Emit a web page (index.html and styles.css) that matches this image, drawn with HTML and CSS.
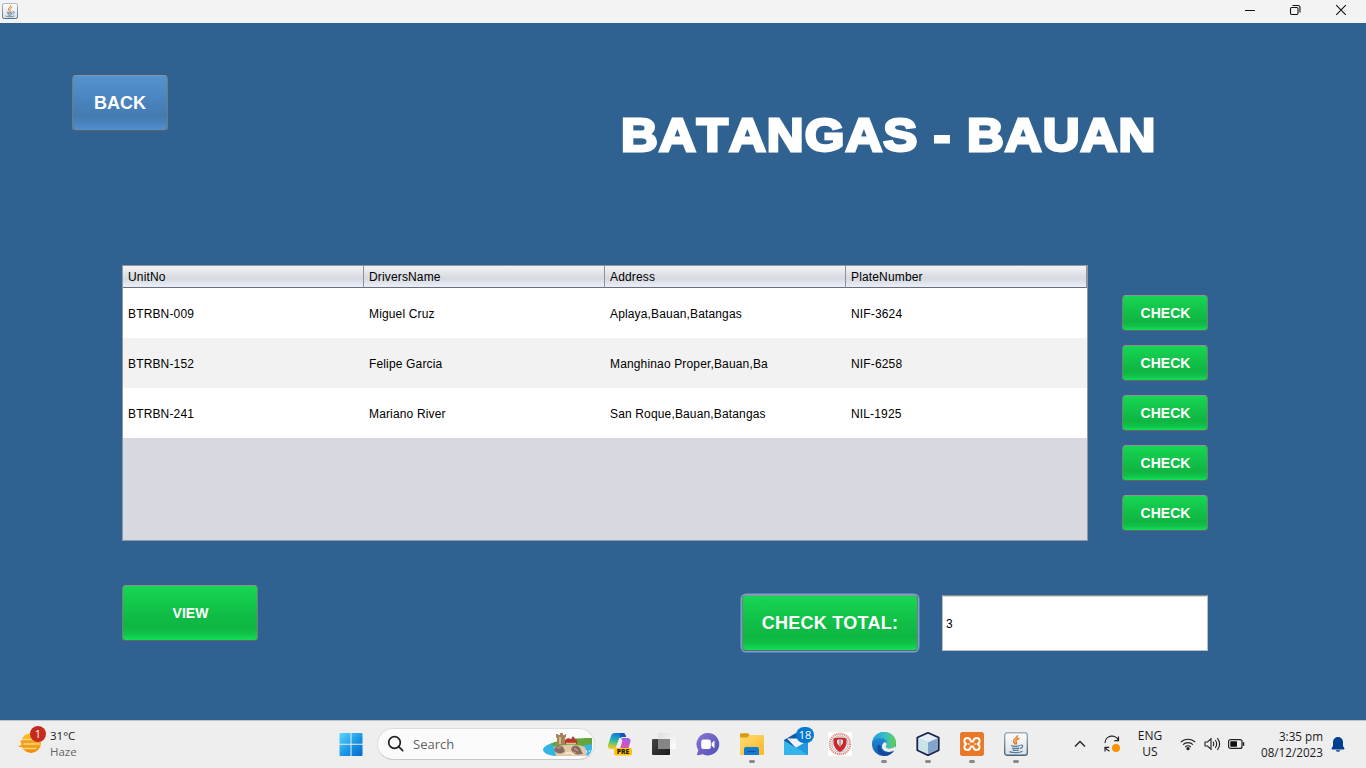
FILE: index.html
```html
<!DOCTYPE html>
<html lang="en">
<head>
<meta charset="utf-8">
<title>Batangas - Bauan</title>
<link rel="stylesheet" href="styles.css">
</head>
<body>
<svg width="0" height="0" class="defs">
  <defs>
    <linearGradient id="javaBorder" x1="0" y1="0" x2="0" y2="1"><stop offset="0" stop-color="#9db3c4"/><stop offset="1" stop-color="#43637d"/></linearGradient>
    <linearGradient id="javaFill" x1="0" y1="0" x2="0" y2="1"><stop offset="0" stop-color="#fdfdfd"/><stop offset="1" stop-color="#dde0e3"/></linearGradient>
    <symbol id="java" viewBox="0 0 24 24">
      <rect x=".7" y=".7" width="22.6" height="22.6" rx="2.6" fill="url(#javaFill)" stroke="url(#javaBorder)" stroke-width="1.4"/>
      <path d="M13.4 3.2c1 2.4-4.3 3.6-3.8 6.2.2 1.3 1.4 2 1.6 3.3M15.4 6.3c-2.400.9-4 2-3.400 3.300.4 1 .9 1.500.1 2.700" fill="none" stroke="#ea7a20" stroke-width="1.5"/>
      <path d="M7 13.500c2 .8 6.500.8 9 0M8 15.800c2 .7 5.500.7 7.400 0M8.600 17.900c1.800.6 4.300.6 6 0M5.400 19.600c3 1.500 10 1.500 13.200-.3M16.500 13.200c3-.7 2.800 2.500-.3 3.300" fill="none" stroke="#537f9f" stroke-width="1.300"/>
    </symbol>
  </defs>
</svg>

<header class="titlebar">
  <svg class="app-icon" width="16" height="16"><use href="#java"/></svg>
  <div class="window-controls">
    <svg width="46" height="22" viewBox="0 0 46 22"><path d="M18 10.500h10" stroke="#111" fill="none"/></svg>
    <svg width="46" height="22" viewBox="0 0 46 22" fill="none" stroke="#111" stroke-width="1.100"><rect x="17.500" y="7.500" width="7.500" height="7" rx="1.200"/><path d="M19.500 5.500h5.500a2 2 0 0 1 2 2v5"/></svg>
    <svg width="46" height="22" viewBox="0 0 46 22"><path d="M17.200 5.200l9.600 9.600m0-9.600l-9.600 9.600" stroke="#111" stroke-width="1.100" fill="none"/></svg>
  </div>
</header>

<main class="form">
  <section class="heading">
    <button class="btn btn-back">BACK</button>
    <h1>BATANGAS - BAUAN</h1>
  </section>

  <section class="records">
    <table class="grid">
      <thead><tr><th>UnitNo</th><th>DriversName</th><th>Address</th><th>PlateNumber</th></tr></thead>
      <tbody>
        <tr><td>BTRBN-009</td><td>Miguel Cruz</td><td>Aplaya,Bauan,Batangas</td><td>NIF-3624</td></tr>
        <tr><td>BTRBN-152</td><td>Felipe Garcia</td><td>Manghinao Proper,Bauan,Ba</td><td>NIF-6258</td></tr>
        <tr><td>BTRBN-241</td><td>Mariano River</td><td>San Roque,Bauan,Batangas</td><td>NIL-1925</td></tr>
        <tr class="blank"><td colspan="4"></td></tr>
      </tbody>
    </table>
    <div class="checks">
      <button class="btn">CHECK</button>
      <button class="btn">CHECK</button>
      <button class="btn">CHECK</button>
      <button class="btn">CHECK</button>
      <button class="btn">CHECK</button>
    </div>
  </section>

  <section class="actions">
    <button class="btn btn-view">VIEW</button>
    <div class="total">
      <button class="btn btn-total">CHECK TOTAL:</button>
      <input class="total-value" type="text" value="3">
    </div>
  </section>
</main>

<footer class="taskbar">
  <div class="weather">
    <svg width="32" height="32" viewBox="0 0 32 32">
      <defs><linearGradient id="sun" x1="0" y1="0" x2="0" y2="1"><stop offset="0" stop-color="#ffc51d"/><stop offset="1" stop-color="#f08a00"/></linearGradient></defs>
      <circle cx="15" cy="18" r="10" fill="url(#sun)"/>
      <path d="M6 14.500h11M8 19h15M6 23.500h14" stroke="#fbd58c" stroke-width="1.400" stroke-linecap="round"/>
      <path d="M5 16.500h11M3.500 21.200h13" stroke="#ef9a24" stroke-width="1.500" stroke-linecap="round"/>
      <circle cx="22" cy="9" r="8" fill="#c42b1c"/>
      <text x="22" y="13" text-anchor="middle" font-size="11" fill="#fff">1</text>
    </svg>
    <p>31°C<br><span>Haze</span></p>
  </div>

  <nav class="apps">
    <a class="app"><svg width="24" height="24" viewBox="0 0 24 24">
      <defs><linearGradient id="win" gradientUnits="userSpaceOnUse" x1="0" y1="0" x2="24" y2="24"><stop offset="0" stop-color="#5cdcff"/><stop offset=".6" stop-color="#1691e2"/><stop offset="1" stop-color="#0467cb"/></linearGradient></defs>
      <path fill="url(#win)" d="M1.500 1H11.500v10.800H.5V2a1 1 0 0 1 1-1zM12.500 1h10a1 1 0 0 1 1 1v9.800h-11zM.5 12.800h11V24h-10a1 1 0 0 1-1-1zM12.500 12.800h11V23a1 1 0 0 1-1 1h-10z"/></svg></a>
    <div class="search">
      <svg width="18" height="18" viewBox="0 0 18 18" fill="none" stroke="#222" stroke-width="1.700"><circle cx="7.500" cy="7.500" r="5.800"/><path d="M11.700 11.700l4 4" stroke-linecap="round"/></svg>
      <span>Search</span>
      <svg class="scene" width="52" height="28" viewBox="0 0 52 28">
        <path d="M1 19c3-5 9-6 18-7l31-1v8q-1 5-5 7H12C6 25 1 23 1 19z" fill="#35b5e5"/>
        <path d="M8 14c9-5 30-6 42-6v6c-8 1-11 3-19 3-10 1-18 0-23-3z" fill="#63a63b"/>
        <path d="M12 17c10-3 24-3 31 0l2 9H14z" fill="#dfc9a7"/>
        <path d="M14 4h2v1h2V3h3v2h2V4h1v3l-1 1v7h-8V8l-1-1z" fill="#a5845a"/>
        <path d="M18 7v7" stroke="#d5b888" stroke-width="2"/>
        <path d="M23 10l3-2 3 1 2-3 2 3 2 1v4H23z" fill="#b5392d"/>
        <path d="M24 13.500h10" stroke="#e5b996" stroke-width="1.500"/>
        <path d="M12 20c1-5 7-5 9-3l2 4c-2 3-8 4-11-1zM29 19c2-5 7-4 9-1l3 6c-6 1-10 1-12-5z" fill="#8b6a5f"/>
        <path d="M15 18l4-1M32 18l4 3M31 22l3 1" stroke="#b99b8c" stroke-width="1.500"/>
        <path d="M23 24q5-3 9 1" stroke="#f2e3cb" stroke-width="2" fill="none"/>
        <path d="M44 20l1 3m3-3l-1 2" stroke="#d9f4fb"/>
      </svg>
    </div>
    <a class="app"><svg width="26" height="26" viewBox="0 0 26 26">
      <defs>
        <linearGradient id="cp1" x1=".5" y1="0" x2=".3" y2="1"><stop offset="0" stop-color="#1473da"/><stop offset=".45" stop-color="#24b3b3"/><stop offset=".8" stop-color="#a8cc3a"/><stop offset="1" stop-color="#f5c32c"/></linearGradient>
        <linearGradient id="cp2" x1=".5" y1="0" x2=".3" y2="1"><stop offset="0" stop-color="#9a60ee"/><stop offset=".6" stop-color="#e355a2"/><stop offset="1" stop-color="#f79a55"/></linearGradient>
      </defs>
      <path d="M8 2h8c2 0 2.500 2 3 4h-4c-2 0-3 1-3.500 3L9 16c-.7 1.500-1.500 2-3 2H4c-2.500 0-3.500-2-3-4L4 5c.6-2 2-3 4-3z" fill="url(#cp1)"/>
      <path d="M13 2h3c2 0 2.500 2 3 4h-4l-2 1z" fill="#1855b7"/>
      <path d="M15 7h5c3 0 4 2 3.300 4L21 19c-.8 2-2 3-4 3h-7c2 0 2.400-2 3-4l2-7c.400-1.500.400-2.500-1-3z" fill="url(#cp2)"/>
      <rect x="7" y="17" width="18" height="7.600" rx="2" fill="#ffc400"/>
      <text x="16" y="23.200" text-anchor="middle" font-size="6.800" font-weight="800" fill="#222">PRE</text></svg></a>
    <a class="app"><svg width="24" height="24" viewBox="0 0 24 24">
      <defs><linearGradient id="tv" x1="0" y1="0" x2="1" y2="1"><stop offset="0" stop-color="#444"/><stop offset="1" stop-color="#1c1c1c"/></linearGradient><linearGradient id="tv2" x1="0" y1="0" x2="1" y2="1"><stop offset="0" stop-color="#dedede"/><stop offset="1" stop-color="#fff"/></linearGradient></defs>
      <rect x="0" y="7" width="18" height="16" rx="1" fill="url(#tv)"/><rect x="6" y="1" width="17.700" height="16" rx="1" fill="url(#tv2)"/><path d="M6 7h12v10H7a1 1 0 0 1-1-1z" fill="#858585"/></svg></a>
    <a class="app"><svg width="24" height="24" viewBox="0 0 24 24">
      <defs><linearGradient id="chat" x1="0" y1="0" x2="1" y2="1"><stop offset="0" stop-color="#8d75d2"/><stop offset="1" stop-color="#4e4fb9"/></linearGradient></defs>
      <path d="M12 1a11.200 11.200 0 1 1-5 21.200L1.500 23.200q-.8 0-.5-1l1.300-4A11.200 11.200 0 0 1 12 1z" fill="url(#chat)"/><rect x="5.200" y="7.500" width="9.600" height="9.500" rx="2" fill="#fff"/><path d="M15.600 11L18.500 8.500v7.700l-2.900-2.500z" fill="#fff"/></svg></a>
    <a class="app running"><svg width="24" height="24" viewBox="0 0 24 24">
      <defs><linearGradient id="fold" x1="0" y1="0" x2="1" y2="1"><stop offset="0" stop-color="#ffdc70"/><stop offset="1" stop-color="#f7b928"/></linearGradient></defs>
      <path d="M0 2.500a1.200 1.200 0 0 1 1.200-1.200H8L10 3.500v5H0z" fill="#d99a0b"/><path d="M9.500 3H23a1 1 0 0 1 1 1v18a1 1 0 0 1-1 1H1a1 1 0 0 1-1-1V5.500h7.500z" fill="url(#fold)"/><path d="M4 23v-6a2 2 0 0 1 2-2h11a2 2 0 0 1 2 2v6z" fill="#167bd0"/><path d="M7.500 19.500h8" stroke="#0a55a0" stroke-width="1.200"/></svg></a>
    <a class="app"><svg width="24" height="24" viewBox="0 0 24 24">
      <path d="M0 8L12 1l12 7v15H0z" fill="#1558a6"/><path d="M3 6.500h18V12l-9 4z" fill="#edf3f8"/><path d="M0 8.500L24 23H1a1 1 0 0 1-1-1z" fill="#34b5ee"/><path d="M24 8.500L0 23h23a1 1 0 0 0 1-1z" fill="#2299df"/><path d="M0 23l12-7.500L24 23z" fill="#32b4ed"/></svg><b class="badge">18</b></a>
    <a class="app"><svg width="24" height="24" viewBox="0 0 24 24">
      <rect width="24" height="24" fill="#fff"/><circle cx="12" cy="12" r="10.200" fill="none" stroke="#dd8b8b" stroke-width="2.200" stroke-dasharray="1.300 .7"/><circle cx="12" cy="12" r="8.200" fill="#fbeeee" stroke="#76a590" stroke-width=".7"/><path d="M5.500 6.500q6.500-2 13 0v5.500q-1 5-6.500 8-5.500-3-6.500-8z" fill="#cf2430"/><path d="M9 8q3-1.500 6 0v3l-3 4-3-4z" fill="#ead9d5"/><path d="M12 7v8" stroke="#6b8f79" stroke-width="1.200"/></svg></a>
    <a class="app running"><svg width="24" height="24" viewBox="0 0 24 24">
      <defs><linearGradient id="e1" x1="0" y1="0" x2="1" y2="0"><stop offset="0" stop-color="#239be0"/><stop offset=".55" stop-color="#35bfc3"/><stop offset="1" stop-color="#67cf4b"/></linearGradient><linearGradient id="e2" x1="0" y1="0" x2="0" y2="1"><stop offset="0" stop-color="#2299df"/><stop offset="1" stop-color="#145cb3"/></linearGradient></defs>
      <circle cx="12" cy="12" r="12" fill="url(#e2)"/>
      <path d="M8.500 13.500C8 20 15 23 22.300 18.200 20 22 16 24 12 24 7 23 4 18 6 13z" fill="#15499a"/>
      <path d="M.3 10.500C1.500 4 6.500 0 12 0c7 0 12 5 12 10.500 0 4-3 6-6 6-3.500 0-5-1.400-4-2.500 3-4-1-8-5.500-8C4.500 6 1.500 8 .3 10.500z" fill="url(#e1)"/>
      <path d="M14 14c-1 1.100.5 2.500 4 2.500 2 0 4-.8 5.200-2.500l.8 4-2 .5c-5 3-11 1-12-3-.5-2.500 1-5 3-5.500 2 .5 2 3 1 4z" fill="#eee"/></svg></a>
    <a class="app running"><svg width="24" height="24" viewBox="0 0 24 24">
      <path d="M12 .8l10.700 4.700v12.800L12 23.300 1.300 18.300V5.500z" fill="#a9cadd" stroke="#1d2149" stroke-width="1.800" stroke-linejoin="round"/><path d="M2.500 6.200L12 10.300l9.500-4.100L12 2z" fill="#e4eff5"/><path d="M12 10.500l9.600-4v11L12 22z" fill="#82a5cb"/><path d="M2.500 6.500l9.500 4V22l-9.500-4.300z" fill="#c9e4e9"/></svg></a>
    <a class="app running"><svg width="24" height="24" viewBox="0 0 24 24">
      <rect x=".3" y=".3" width="23.400" height="23.400" rx="2.500" fill="#ee7722" stroke="#c76117" stroke-width=".6"/><path d="M10.600 9.600C11 5.200 4.400 4.800 4.400 8.900c0 1.900 1.200 3 2.800 3.100-1.600.1-2.800 1.200-2.800 3.100 0 4.100 6.600 3.700 6.200-.7M13.400 9.600c-.4-4.400 6.200-4.800 6.200-.7 0 1.900-1.200 3-2.800 3.100 1.600.1 2.800 1.200 2.800 3.100 0 4.100-6.600 3.700-6.200-.7M10.200 9.600h3.600M10.200 14.400h3.600M8.400 12h1M14.600 12h1" fill="none" stroke="#fff" stroke-width="2"/></svg></a>
    <a class="app running"><svg width="24" height="24"><use href="#java"/></svg></a>
  </nav>

  <div class="tray">
    <svg class="chevron" width="12" height="8" viewBox="0 0 12 8" fill="none" stroke="#222" stroke-width="1.400"><path d="M1 6.500l5-5 5 5"/></svg>
    <svg class="sync" width="18" height="18" viewBox="0 0 18 18" fill="none" stroke="#222" stroke-width="1.200"><path d="M2 8A7 7 0 0 1 15.500 5.500M15.500 1.500v4.200h-4.200M2 16.500v-4.200h4.200M2.300 12.500q1.700 3 4.200 3.700"/><circle cx="13" cy="13" r="4" fill="#fb9404" stroke="none"/></svg>
    <p class="lang">ENG<br>US</p>
    <svg class="wifi" width="16" height="14" viewBox="0 0 16 14" fill="none" stroke="#222" stroke-width="1.100"><path d="M.8 5.200a10.200 10.200 0 0 1 14.400 0M3 7.700a7 7 0 0 1 10 0M5.200 10a4 4 0 0 1 5.600 0"/><circle cx="8" cy="11.700" r="1.100" fill="#222"/></svg>
    <svg class="volume" width="17" height="14" viewBox="0 0 17 14" fill="none" stroke="#222" stroke-width="1.100"><path d="M1 5h2.500L7 1.800v10.400L3.500 9H1zM9 4.800q1.500 2.200 0 4.400M11.200 3q3 4 0 8M13.400 1.200q4.500 5.800 0 11.600"/></svg>
    <svg class="battery" width="17" height="10" viewBox="0 0 17 10"><rect x=".6" y=".6" width="13.400" height="8.800" rx="2" fill="none" stroke="#222" stroke-width="1.200"/><rect x="2.300" y="2.300" width="6.700" height="5.400" rx=".6" fill="#111"/><path d="M15.500 3.200v3.600" stroke="#222" stroke-width="1.500"/></svg>
    <p class="clock">3:35 pm<br>08/12/2023</p>
    <svg class="bell" width="14" height="15" viewBox="0 0 14 15" fill="#003e92"><path d="M7 0a5 5 0 0 1 5 5v4l1.400 2.300q.3 1-.7 1.200H1.300q-1-.2-.7-1.200L2 9V5a5 5 0 0 1 5-5zM4.700 13.200h4.600q-.7 1.600-2.300 1.600t-2.300-1.600z"/></svg>
  </div>
</footer>
</body>
</html>
```
FILE: styles.css
```css
* { box-sizing: border-box; }

body {
  margin: 0;
  width: 1366px;
  height: 768px;
  overflow: hidden;
  display: flex;
  flex-direction: column;
  font-family: "Liberation Sans", Arial, sans-serif;
}

svg { display: block; flex: none; }
.defs { position: absolute; }
p { margin: 0; }

.titlebar {
  flex: none;
  height: 23px;
  display: flex;
  justify-content: space-between;
  background: #f3f3f3;
}
.app-icon { margin: 3px 0 0 2px; }
.window-controls { display: flex; margin-right: 1px; }

.form {
  flex: none;
  height: 697px;
  padding-top: 52px;
  background: #2f6291;
}

.btn {
  flex: none;
  display: block;
  padding: 0 0 0 1px;
  border: 1px solid;
  border-color: #929292 #777e78 #63696a #777e78;
  border-radius: 4px;
  background: linear-gradient(#17d653, #10bd46 55%, #0eb641 75%, #10c248 88%, #14de57);
  color: #fff;
  font: bold 14px "Liberation Sans", Arial, sans-serif;
}

.heading {
  display: flex;
  height: 190px;
  padding-left: 72px;
}
.btn-back {
  width: 96px;
  height: 56px;
  padding: 0;
  border-color: #8b929a #73797f #5b626a #73797f;
  background: linear-gradient(#5493cd, #4984bf 45%, #447bb0 75%, #4984bf 88%, #5291cc);
  font-size: 18px;
}
h1 {
  margin: 31px 0 0 453px;
  height: 58px;
  color: #fff;
  font: bold 47px/58px "Liberation Sans", Arial, sans-serif;
  font-kerning: none;
  letter-spacing: 1px;
  white-space: nowrap;
  -webkit-text-stroke: 2.8px #fff;
  transform: scaleX(1.084);
  transform-origin: left;
}

.records {
  display: flex;
  gap: 34px;
  padding-left: 122px;
}
.grid {
  width: 966px;
  height: 276px;
  border: 1px solid #9297a1;
  border-collapse: separate;
  border-spacing: 0;
  table-layout: fixed;
  background: #fff;
  font-size: 12px;
  color: #000;
}
.grid th, .grid td {
  padding: 0 5px;
  text-align: left;
  font-weight: normal;
  letter-spacing: 0.15px;
}
.grid th {
  height: 22px;
  border-right: 1px solid #8d929b;
  border-bottom: 1px solid #6a6f7c;
  background: linear-gradient(#f5f5f7, #dfe1e6 40%, #d6d9e0 60%, #eceff7);
}
.grid td { height: 50px; padding-top: 2px; }
.grid tr:nth-child(even) td { background: #f2f2f2; }
.grid .blank td { height: auto; background: #d6d9e0 !important; }
.checks {
  display: flex;
  flex-direction: column;
  gap: 14px;
  height: 276px;
  padding-top: 30px;
}
.checks .btn { width: 86px; height: 36px; }

.actions {
  display: flex;
  justify-content: space-between;
  align-items: flex-start;
  padding: 44px 158px 0 122px;
}
.btn-view { width: 136px; height: 56px; }
.total {
  display: flex;
  gap: 24px;
  padding-top: 10px;
}
.btn-total {
  width: 176px;
  height: 56px;
  padding: 0;
  font-size: 18px;
  letter-spacing: 0.25px;
  box-shadow: 0 0 0 1.5px #73a4d1;
}
.total-value {
  width: 266px;
  height: 56px;
  padding: 2px 3px 0;
  border: 1px solid #b9bdc2;
  border-top-color: #8d8e8f;
  background: #fff;
  box-shadow: inset 0 1px 0 #d3d3d3;
  font: 12px "Liberation Sans", Arial, sans-serif;
}

.taskbar {
  flex: none;
  height: 48px;
  display: flex;
  border-top: 1px solid #bfc3c7;
  background: #eee;
  color: #1b1b1b;
  font: 11.5px/16px "Open Sans", "Noto Sans", sans-serif;
}
.weather {
  flex: none;
  display: flex;
  width: 329px;
  padding: 4px 0 0 16px;
}
.weather p { padding: 3px 0 0 2px; }
.weather span { color: #666; }

.apps { display: flex; margin-right: auto; }
.app {
  position: relative;
  width: 44px;
  height: 47px;
  padding-bottom: 2px;
  display: flex;
  flex-direction: column;
  align-items: center;
  justify-content: center;
}
.app.running::after {
  content: "";
  position: absolute;
  bottom: 5px;
  width: 6px;
  height: 3px;
  border-radius: 2px;
  background: #898989;
}
.badge {
  position: absolute;
  left: 22px;
  top: 6px;
  width: 18px;
  height: 16px;
  border-radius: 8px;
  background: #0878d1;
  color: #fff;
  font-size: 11px;
  font-weight: 500;
  line-height: 16px;
  text-align: center;
}
.search {
  width: 218px;
  height: 32px;
  display: flex;
  align-items: center;
  margin: 7px 3px 0 4px;
  padding: 0 0 0 9px;
  border: 1px solid #dcdcdc;
  border-bottom-color: #c9c9c9;
  border-radius: 16px;
  background: #fbfbfb;
}
.search span {
  margin: 0 auto 0 8px;
  color: #616161;
  font-size: 13px;
}

.tray {
  display: flex;
  align-items: center;
  padding: 0 21px 1px 0;
}
.sync { margin-left: 17px; }
.lang {
  width: 40px;
  margin-left: 9px;
  text-align: center;
  font-size: 12px;
}
.wifi { margin-left: 10px; }
.volume { margin-left: 8px; }
.battery { margin-left: 7px; }
.clock {
  width: 76px;
  margin-left: 2px;
  text-align: right;
  white-space: nowrap;
  font-size: 11.7px;
}
.bell { margin-left: 8px; }
```
